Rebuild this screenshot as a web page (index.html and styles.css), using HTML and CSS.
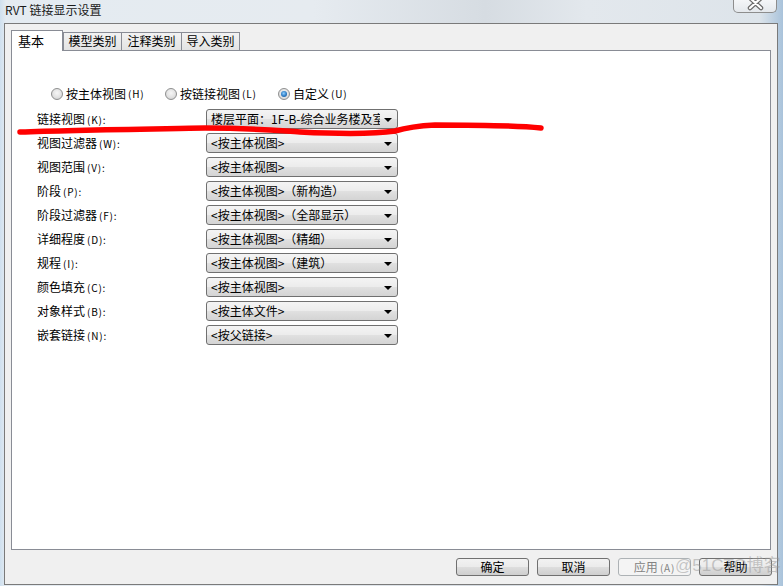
FILE: index.html
```html
<!DOCTYPE html>
<html lang="zh">
<head>
<meta charset="utf-8">
<title>RVT 链接显示设置</title>
<link rel="stylesheet" href="styles.css">
</head>
<body>
<div class="window">
  <div class="titlebar">
    <span class="title">RVT 链接显示设置</span>
    <div class="close">
      <svg width="44" height="13" viewBox="0 0 44 13">
        <path d="M17 -1 L28 9 M28 -1 L17 9" stroke="#6a6a6a" stroke-width="4.5" stroke-linecap="round" fill="none"/>
        <path d="M17 -1 L28 9 M28 -1 L17 9" stroke="#ffffff" stroke-width="2.2" stroke-linecap="round" fill="none"/>
      </svg>
    </div>
  </div>
  <div class="client">
    <div class="tabs">
      <div class="tab active">基本</div>
      <div class="tab t2">模型类别</div>
      <div class="tab t3">注释类别</div>
      <div class="tab t4">导入类别</div>
    </div>
    <div class="panel">
      <div class="radios">
        <div class="ropt"><span class="radio"></span>按主体视图<span class="k">(H)</span></div>
        <div class="ropt"><span class="radio"></span>按链接视图<span class="k">(L)</span></div>
        <div class="ropt"><span class="radio on"></span>自定义<span class="k">(U)</span></div>
      </div>
      <div class="rows">
        <div class="row"><span class="lbl">链接视图<span class="k">(K):</span></span><div class="combo"><span class="val">楼层平面：1F-B-综合业务楼及室外</span><i class="arrow"></i></div></div>
        <div class="row"><span class="lbl">视图过滤器<span class="k">(W):</span></span><div class="combo"><span class="val">&lt;按主体视图&gt;</span><i class="arrow"></i></div></div>
        <div class="row"><span class="lbl">视图范围<span class="k">(V):</span></span><div class="combo"><span class="val">&lt;按主体视图&gt;</span><i class="arrow"></i></div></div>
        <div class="row"><span class="lbl">阶段<span class="k">(P):</span></span><div class="combo"><span class="val">&lt;按主体视图&gt;（新构造）</span><i class="arrow"></i></div></div>
        <div class="row"><span class="lbl">阶段过滤器<span class="k">(F):</span></span><div class="combo"><span class="val">&lt;按主体视图&gt;（全部显示）</span><i class="arrow"></i></div></div>
        <div class="row"><span class="lbl">详细程度<span class="k">(D):</span></span><div class="combo"><span class="val">&lt;按主体视图&gt;（精细）</span><i class="arrow"></i></div></div>
        <div class="row"><span class="lbl">规程<span class="k">(I):</span></span><div class="combo"><span class="val">&lt;按主体视图&gt;（建筑）</span><i class="arrow"></i></div></div>
        <div class="row"><span class="lbl">颜色填充<span class="k">(C):</span></span><div class="combo"><span class="val">&lt;按主体视图&gt;</span><i class="arrow"></i></div></div>
        <div class="row"><span class="lbl">对象样式<span class="k">(B):</span></span><div class="combo"><span class="val">&lt;按主体文件&gt;</span><i class="arrow"></i></div></div>
        <div class="row"><span class="lbl">嵌套链接<span class="k">(N):</span></span><div class="combo"><span class="val">&lt;按父链接&gt;</span><i class="arrow"></i></div></div>
      </div>
    </div>
    <div class="buttons">
      <div class="btn">确定</div>
      <div class="btn">取消</div>
      <div class="btn disabled">应用<span class="k">(A)</span></div>
      <div class="btn">帮助</div>
    </div>
  </div>
  <div class="watermark">@51CTO博客</div>
  <svg class="scribble" width="783" height="586" viewBox="0 0 783 586">
    <path d="M20 132 C 70 130, 150 129, 205 128 C 250 128, 270 130, 300 132 C 340 134, 375 134, 395 131 C 405 128, 415 126, 435 125 C 480 125, 520 126, 541 128" stroke="#ff0000" stroke-width="5.5" stroke-linecap="round" fill="none"/>
  </svg>
</div>
</body>
</html>
```
FILE: styles.css
```css
html, body {
  margin: 0;
  padding: 0;
}
body {
  width: 783px;
  height: 586px;
  overflow: hidden;
  font-family: "Noto Sans CJK SC", "Noto Sans", sans-serif;
  font-size: 12px;
  color: #000;
  background: linear-gradient(to right, #cfe0ef 0px, #e4ebf1 6px, #e6ebf0 40%, #d6dce2 62%, #e3e8ed 75%, #dde4ea 97%, #a9c3db 100%);
}
.window {
  position: relative;
  width: 783px;
  height: 586px;
}
.titlebar {
  height: 23px;
  display: flex;
  align-items: flex-start;
  padding-left: 5px;
  box-sizing: border-box;
}
.title {
  margin-top: 2px;
  line-height: 16px;
  font-size: 12px;
  color: #1a1a1a;
}
.close {
  margin-left: auto;
  margin-right: 6px;
  width: 44px;
  height: 13px;
  box-sizing: border-box;
  border: 1px solid #8d8d8d;
  border-top: none;
  border-radius: 0 0 5px 5px;
  background: linear-gradient(#f4f6f8, #e4e8ec);
  overflow: hidden;
}
.close svg {
  display: block;
  margin: -1px 0 0 -1px;
}
.client {
  margin-left: 4px;
  width: 774px;
  height: 562px;
  box-sizing: border-box;
  border: 1px solid #7a7a7a;
  background: #f0f0f0;
  padding: 6px 5px 8px 6px;
}
.tabs {
  display: flex;
  align-items: flex-end;
  height: 20px;
  position: relative;
  z-index: 2;
}
.tab {
  height: 18px;
  box-sizing: border-box;
  border: 1px solid #898c95;
  border-bottom: none;
  background: linear-gradient(#f2f2f2, #e3e3e3);
  text-align: center;
  line-height: 16px;
  font-size: 12px;
}
.tab.active {
  width: 52px;
  height: 21px;
  margin-bottom: -1px;
  background: #fff;
  text-align: left;
  padding-left: 6px;
  line-height: 19px;
  font-size: 13px;
}
.tab.t2 { width: 59px; margin-left: 0; }
.tab.t3 { width: 61px; margin-left: -1px; }
.tab.t4 { width: 59px; margin-left: -1px; }
.panel {
  width: 760px;
  height: 500px;
  box-sizing: border-box;
  border: 1px solid #898c95;
  background: #fff;
  padding: 35px 0 0 0;
}
.k {
  font-size: 10px;
  letter-spacing: 0.8px;
  margin-left: 2px;
}
.radios {
  display: grid;
  grid-template-columns: 114px 113px auto;
  padding-left: 39px;
  height: 16px;
  align-items: center;
}
.ropt {
  display: flex;
  align-items: center;
  line-height: 16px;
}
.radio {
  width: 12px;
  height: 12px;
  box-sizing: border-box;
  border-radius: 50%;
  border: 1px solid #8e8f8f;
  background: radial-gradient(circle at 50% 40%, #f6f6f6 0%, #e2e2e2 55%, #c8c8c8 100%);
  margin-right: 3px;
  position: relative;
}
.radio.on::after {
  content: "";
  position: absolute;
  left: 2px;
  top: 2px;
  width: 6px;
  height: 6px;
  border-radius: 50%;
  background: radial-gradient(circle at 45% 40%, #8fd0ff 0%, #2d7bc4 55%, #1a4f85 100%);
}
.rows {
  margin-top: 7px;
  padding-left: 25px;
  display: flex;
  flex-direction: column;
  gap: 4px;
}
.row {
  display: flex;
  align-items: center;
  height: 20px;
}
.lbl {
  width: 169px;
  line-height: 16px;
}
.combo {
  width: 192px;
  height: 20px;
  box-sizing: border-box;
  border: 1px solid #707070;
  border-radius: 3px;
  background: linear-gradient(#f4f4f4 0%, #ececec 48%, #e0e0e0 52%, #d4d4d4 100%);
  padding-left: 4px;
  display: flex;
  align-items: center;
}
.val {
  flex: 1;
  overflow: hidden;
  white-space: nowrap;
  line-height: 16px;
}
.arrow {
  width: 0;
  height: 0;
  border-left: 4px solid transparent;
  border-right: 4px solid transparent;
  border-top: 4px solid #000;
  margin: 1px 5px 0 4px;
}
.buttons {
  display: flex;
  justify-content: flex-end;
  gap: 8px;
  margin-top: 8px;
}
.btn {
  width: 73px;
  height: 18px;
  box-sizing: border-box;
  border: 1px solid #707070;
  border-radius: 3px;
  background: linear-gradient(#f2f2f2 0%, #ebebeb 48%, #dddddd 52%, #cfcfcf 100%);
  text-align: center;
  line-height: 16px;
}
.btn.disabled {
  border-color: #adb2b5;
  background: #f4f4f4;
  color: #838383;
}
.watermark {
  position: absolute;
  left: 675px;
  top: 555px;
  font-family: "Liberation Sans", "Noto Sans CJK SC", sans-serif;
  font-size: 17px;
  line-height: 22px;
  color: rgba(150, 150, 150, 0.5);
  pointer-events: none;
  white-space: nowrap;
}
.scribble {
  position: absolute;
  left: 0;
  top: 0;
  pointer-events: none;
}
```
